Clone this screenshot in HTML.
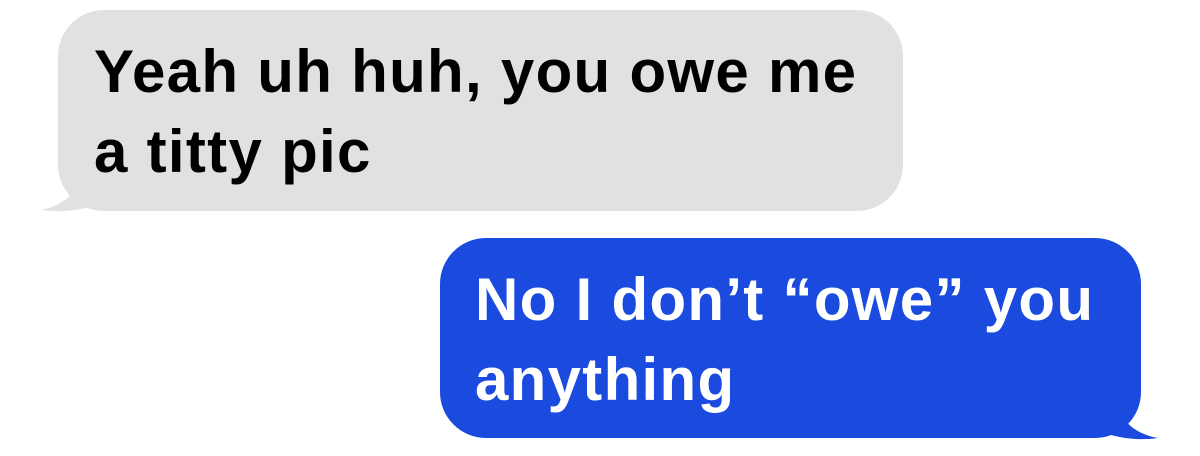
<!DOCTYPE html>
<html><head><style>
body{margin:0;width:1200px;height:456px;background:#fff;position:relative;overflow:hidden;font-family:"Liberation Sans",sans-serif;font-weight:bold;}
.b{position:absolute;border-radius:46px;}
.t{position:absolute;font-size:60px;line-height:80px;white-space:nowrap;letter-spacing:1.3px;}
</style></head><body>
<svg width="1200" height="456" style="position:absolute;left:0;top:0">
<path d="M88,145 C88,185 70,203 42,210 C70,214 95,207 112,198 L112,145 Z" fill="#e1e1e3"/>
<path d="M1112,375 C1112,415 1130,433 1158,438 C1130,442 1105,435 1088,426 L1088,375 Z" fill="#1a4ade"/>
</svg>
<div class="b" style="left:58px;top:10px;width:845px;height:201px;background:#e1e1e3"></div>
<div class="b" style="left:440px;top:238px;width:701px;height:200px;background:#1a4ade"></div>
<div class="t" style="left:94px;top:32px;color:#000">Yeah uh huh, you owe me<br>a titty pic</div>
<div class="t" style="left:475px;top:260px;color:#fff">No I don’t “owe” you<br>anything</div>
</body></html>
